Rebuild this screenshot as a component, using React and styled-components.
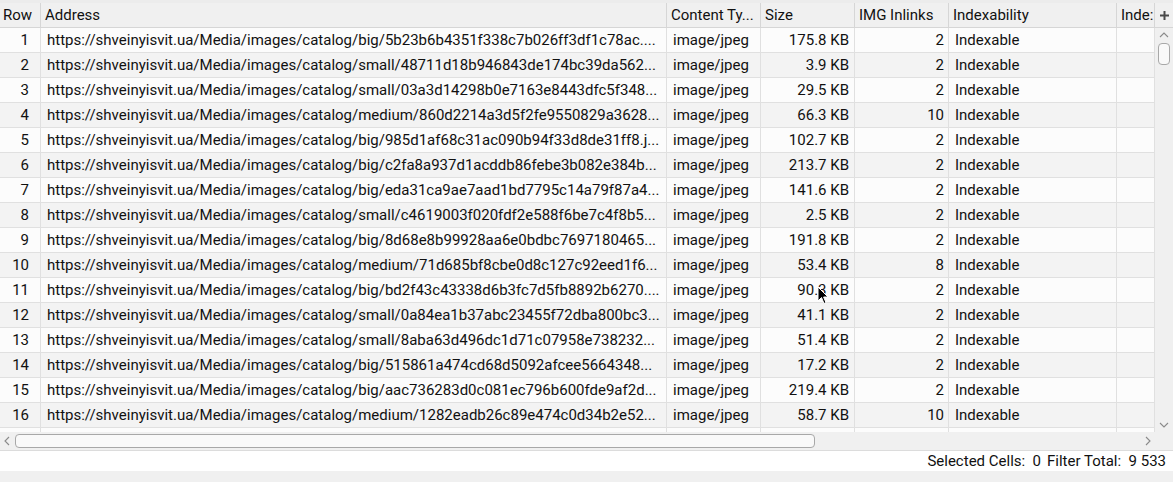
import React from "react";
import styled, { createGlobalStyle } from "styled-components";

const GlobalStyle = createGlobalStyle`
  html, body {
    margin: 0;
    padding: 0;
    background: #f0f0f0;
  }
  body {
    font-family: Roboto, "Liberation Sans", sans-serif;
  }
`;

const COLS = "41px 626px 94px 94px 94px 168px 38px";

const Frame = styled.div`
  width: 1173px;
  height: 482px;
  background: #f0f0f0;
  display: flex;
  flex-direction: column;
  overflow: hidden;
  position: relative;
  font-size: 15px;
  color: #111;
`;

const TopGap = styled.div`
  height: 3px;
  background: #ececec;
  flex: none;
`;

const Main = styled.div`
  display: flex;
  flex: none;
  height: 429px;
`;

const TablePane = styled.div`
  width: 1155px;
  overflow: hidden;
  display: flex;
  flex-direction: column;
  background: #fff;
`;

const Row = styled.div`
  display: grid;
  grid-template-columns: ${COLS};
  height: 25px;
  flex: none;
  background: ${(p) => (p.$head ? "#f0f0f0" : p.$odd ? "#fcfcfc" : "#f3f3f3")};
  border-bottom: 1px solid ${(p) => (p.$head ? "#d6d6d6" : "#e0e0e0")};
  box-sizing: border-box;
`;

const Cell = styled.div`
  display: flex;
  align-items: center;
  justify-content: ${(p) => (p.$right ? "flex-end" : "flex-start")};
  padding: ${(p) => (p.$right ? `1px ${p.$pr || 4}px 0 4px` : "1px 3px 0 6px")};
  border-right: 1px solid ${(p) => (p.$head ? "#d6d6d6" : "#e0e0e0")};
  white-space: nowrap;
  overflow: hidden;
  line-height: 23px;
  box-sizing: border-box;
`;

const HeadCell = styled(Cell)`
  padding-top: 0;
  line-height: 24px;
  padding-left: ${(p) => (p.$first ? 3 : 4)}px;
`;

const VScroll = styled.div`
  width: 18px;
  display: flex;
  flex-direction: column;
  background: #f0f0f0;
`;

const Corner = styled.div`
  height: 25px;
  display: flex;
  align-items: center;
  justify-content: center;
  background: #f0f0f0;
  border-bottom: 1px solid #d6d6d6;
  box-sizing: border-box;
`;

const Track = styled.div`
  flex: 1;
  display: flex;
  flex-direction: ${(p) => (p.$h ? "row" : "column")};
  align-items: center;
  background: #f0f0f0;
`;

const Arrow = styled.div`
  width: ${(p) => (p.$h ? "14px" : "18px")};
  height: ${(p) => (p.$h ? "18px" : "14px")};
  display: flex;
  align-items: center;
  justify-content: center;
  flex: none;
`;

const Thumb = styled.div`
  box-sizing: border-box;
  border: 1px solid #a8a8a8;
  background: #f9f9f9;
  border-radius: 4px;
  flex: none;
  ${(p) =>
    p.$h
      ? `width: 800px; height: 14px; margin-left: 1px;`
      : `width: 12px; height: 22px; margin-top: 1px;`}
`;

const Spacer = styled.div`
  flex: 1;
`;

const HScroll = styled.div`
  height: 18px;
  display: flex;
  flex: none;
  background: #f0f0f0;
  border-bottom: 1px solid #dcdcdc;
`;

const HTrack = styled(Track)`
  width: 1155px;
  flex: none;
`;

const StatusBar = styled.div`
  height: 20px;
  background: #fff;
  display: flex;
  align-items: center;
  justify-content: flex-end;
  padding-right: 7px;
  gap: 6px;
  flex: none;
`;

const Cursor = styled.svg`
  position: absolute;
  left: 817px;
  top: 286px;
`;

const base = "https://shveinyisvit.ua/Media/images/catalog/";

const data = [
  ["big/5b23b6b4351f338c7b026ff3df1c78ac....", "175.8 KB", 2],
  ["small/48711d18b946843de174bc39da562...", "3.9 KB", 2],
  ["small/03a3d14298b0e7163e8443dfc5f348...", "29.5 KB", 2],
  ["medium/860d2214a3d5f2fe9550829a3628...", "66.3 KB", 10],
  ["big/985d1af68c31ac090b94f33d8de31ff8.j...", "102.7 KB", 2],
  ["big/c2fa8a937d1acddb86febe3b082e384b...", "213.7 KB", 2],
  ["big/eda31ca9ae7aad1bd7795c14a79f87a4...", "141.6 KB", 2],
  ["small/c4619003f020fdf2e588f6be7c4f8b5...", "2.5 KB", 2],
  ["big/8d68e8b99928aa6e0bdbc7697180465...", "191.8 KB", 2],
  ["medium/71d685bf8cbe0d8c127c92eed1f6...", "53.4 KB", 8],
  ["big/bd2f43c43338d6b3fc7d5fb8892b6270....", "90.3 KB", 2],
  ["small/0a84ea1b37abc23455f72dba800bc3...", "41.1 KB", 2],
  ["small/8aba63d496dc1d71c07958e738232...", "51.4 KB", 2],
  ["big/515861a474cd68d5092afcee5664348...", "17.2 KB", 2],
  ["big/aac736283d0c081ec796b600fde9af2d...", "219.4 KB", 2],
  ["medium/1282eadb26c89e474c0d34b2e52...", "58.7 KB", 10],
];

const Chevron = ({ dir }) => {
  const paths = {
    up: "M1 6 L5 2 L9 6",
    down: "M1 2 L5 6 L9 2",
    left: "M6 1 L2 5 L6 9",
    right: "M2 1 L6 5 L2 9",
  };
  const vertical = dir === "up" || dir === "down";
  return (
    <svg width={vertical ? 10 : 8} height={vertical ? 8 : 10} viewBox={vertical ? "0 0 10 8" : "0 0 8 10"}>
      <path d={paths[dir]} fill="none" stroke="#8a8a8a" strokeWidth="1.1" />
    </svg>
  );
};

const PlusIcon = () => (
  <svg width="9" height="9" viewBox="0 0 9 9">
    <path d="M3.5 0 H5.5 V3.5 H9 V5.5 H5.5 V9 H3.5 V5.5 H0 V3.5 H3.5 Z" fill="#4a4a4a" />
  </svg>
);

export default function App() {
  return (
    <Frame>
      <GlobalStyle />
      <TopGap />
      <Main>
        <TablePane>
          <Row $head>
            <HeadCell $head $first>Row</HeadCell>
            <HeadCell $head>Address</HeadCell>
            <HeadCell $head>Content Ty...</HeadCell>
            <HeadCell $head>Size</HeadCell>
            <HeadCell $head>IMG Inlinks</HeadCell>
            <HeadCell $head>Indexability</HeadCell>
            <HeadCell $head>Inde:</HeadCell>
          </Row>
          {data.map(([path, size, inl], i) => (
            <Row key={i} $odd={i % 2 === 0}>
              <Cell $right $pr={11}>{i + 1}</Cell>
              <Cell>{base + path}</Cell>
              <Cell>image/jpeg</Cell>
              <Cell $right $pr={5}>{size}</Cell>
              <Cell $right $pr={4}>{inl}</Cell>
              <Cell>Indexable</Cell>
              <Cell />
            </Row>
          ))}
          <Row $odd>
            <Cell />
            <Cell />
            <Cell />
            <Cell />
            <Cell />
            <Cell />
            <Cell />
          </Row>
        </TablePane>
        <VScroll>
          <Corner>
            <PlusIcon />
          </Corner>
          <Track>
            <Arrow>
              <Chevron dir="up" />
            </Arrow>
            <Thumb />
            <Spacer />
            <Arrow>
              <Chevron dir="down" />
            </Arrow>
          </Track>
        </VScroll>
      </Main>
      <HScroll>
        <HTrack $h>
          <Arrow $h>
            <Chevron dir="left" />
          </Arrow>
          <Thumb $h />
          <Spacer />
          <Arrow $h>
            <Chevron dir="right" />
          </Arrow>
        </HTrack>
      </HScroll>
      <StatusBar>
        <span>Selected Cells:&nbsp; 0</span>
        <span>Filter Total:&nbsp; 9 533</span>
      </StatusBar>
      <Cursor width="13" height="20" viewBox="0 0 13 20">
        <path d="M1 1 L1 15 L4.5 11.5 L7 17.5 L9 16.6 L6.6 11 L11 11 Z" fill="#000" stroke="#fff" strokeWidth="1" />
      </Cursor>
    </Frame>
  );
}
